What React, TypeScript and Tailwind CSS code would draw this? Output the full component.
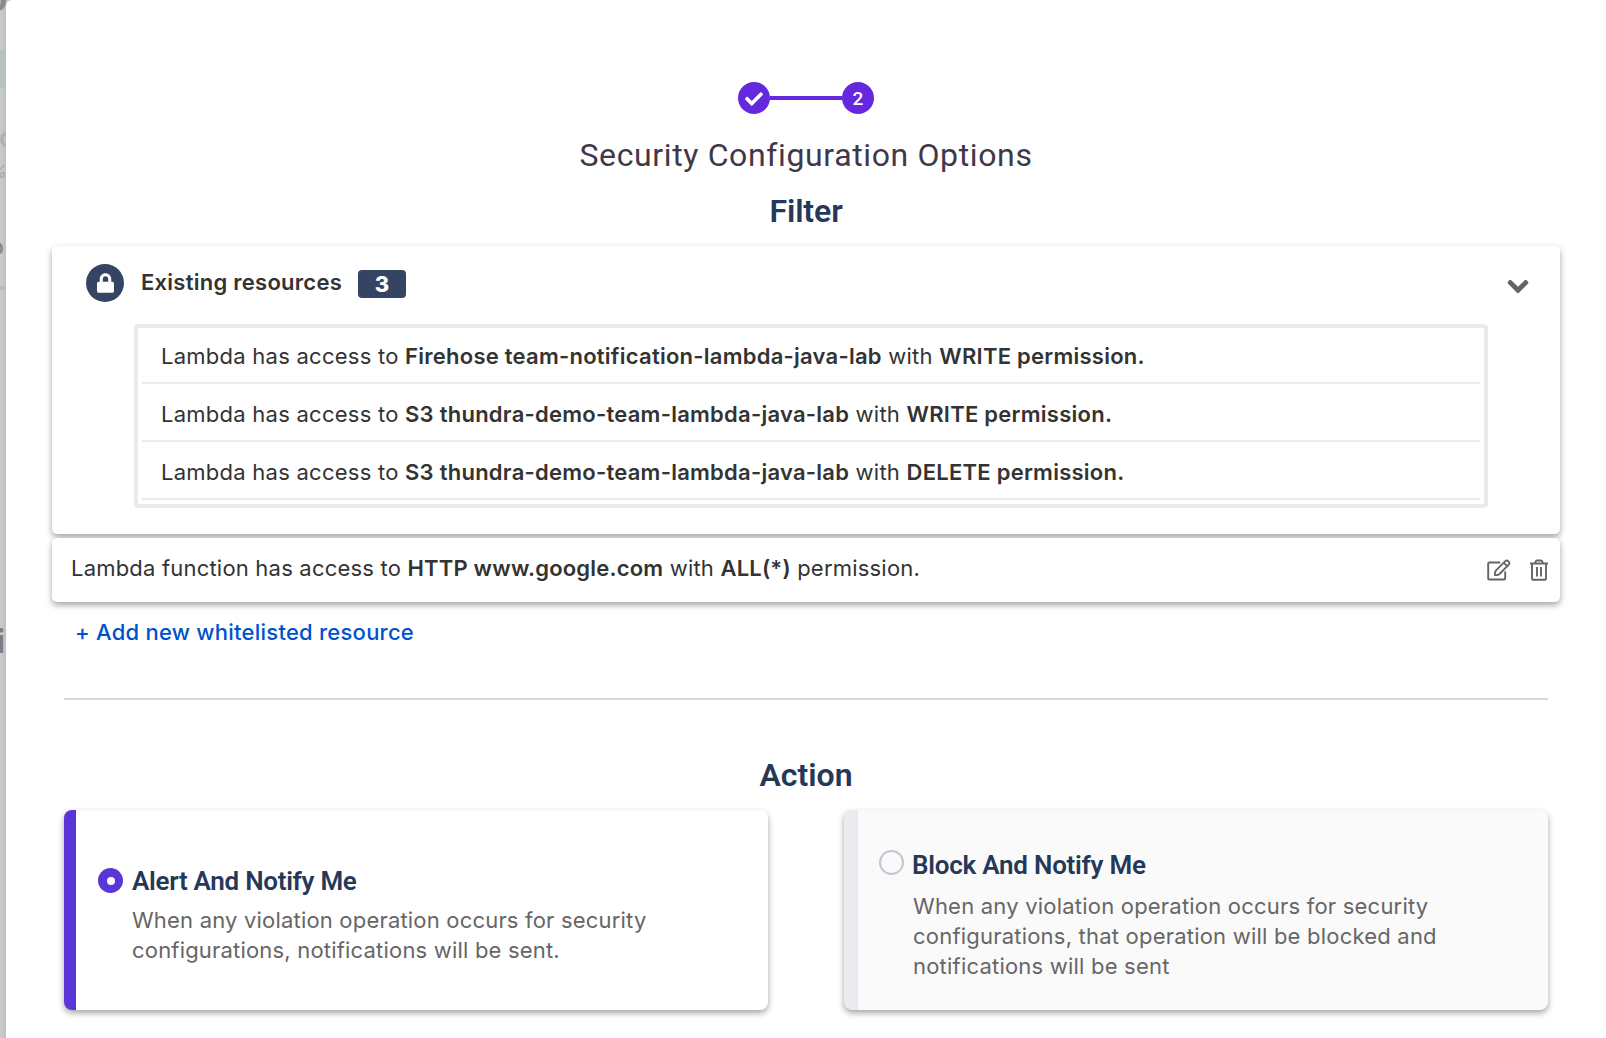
import { FaCheck, FaChevronDown, FaLock } from 'react-icons/fa';

const resources = [
  { name: 'Firehose team-notification-lambda-java-lab', permission: 'WRITE permission.' },
  { name: 'S3 thundra-demo-team-lambda-java-lab', permission: 'WRITE permission.' },
  { name: 'S3 thundra-demo-team-lambda-java-lab', permission: 'DELETE permission.' },
];

/** Dimmed page that shows along the left edge of the dialog. */
function Backdrop() {
  return (
    <div className="relative w-1.5 shrink-0 bg-linear-to-r from-[#cbcbcb] to-[#c0c0c0]">
      <div className="absolute top-[50px] h-[38px] w-full bg-[#b5c2bd]" />
      <span className="absolute -top-[18px] -right-px text-[34px] leading-none font-bold text-[#8a8a8a]">o</span>
      <span className="absolute top-[124px] -left-px text-[26px] leading-7 font-semibold text-[#b0b0b0]">c</span>
      <span className="absolute top-[162px] -left-2.5 text-[17px] leading-5 italic text-[#a6a6a6]">%</span>
      <span className="absolute top-[233px] right-[2px] text-[24px] leading-7 font-medium text-[#888888]">o</span>
      <div className="absolute top-[286px] h-1 w-full bg-[#b9b9c0]" />
      <span className="absolute top-[624px] right-[1px] text-[32px] leading-9 font-semibold text-[#7d7d7d]">i</span>
    </div>
  );
}

function EditIcon() {
  return (
    <svg width="24" height="22" viewBox="0 0 24 22" fill="none" stroke="#646464" strokeWidth="1.9" strokeLinejoin="round" strokeLinecap="round">
      <path d="M12.500 3.500H2.200a1 1 0 0 0-1 1v15a1 1 0 0 0 1 1h15a1 1 0 0 0 1-1v-6.300" />
      <path d="M8 16c-.300-2 0-3.500 1-4.600L18.300 2.100a2 2 0 0 1 2.900 0l.600.600a2 2 0 0 1 0 2.900L12.500 15c-1.100 1-2.500 1.300-4.500 1z" />
      <path d="M16.800 3.800l3.400 3.400" />
    </svg>
  );
}

function TrashIcon() {
  return (
    <svg width="18" height="22" viewBox="0 0 18 22" fill="none" stroke="#646464" strokeWidth="1.9" strokeLinejoin="round">
      <path d="M0 4.500h18M5 4.500l.800-2.200a1.200 1.200 0 0 1 1.100-.800h4.200a1.200 1.200 0 0 1 1.100.800l.800 2.200M2 4.500v15.200a1 1 0 0 0 1 1h12a1 1 0 0 0 1-1V4.500" />
      <path d="M7 8v9.500M11 8v9.500" />
    </svg>
  );
}

function Stepper() {
  return (
    <div className="flex items-center justify-center text-white">
      <div className="flex size-8 items-center justify-center rounded-full bg-[#6528e0]">
        <FaCheck className="mt-0.5 size-[18px]" />
      </div>
      <div className="h-1 w-[72px] bg-[#6528e0]" />
      <div className="flex size-8 items-center justify-center rounded-full bg-[#6528e0] pt-[3px] font-[Roboto] text-[19px] font-medium">2</div>
    </div>
  );
}

function ExistingResources() {
  return (
    <section className="h-[288px] rounded-[5px] bg-white pt-[18px] shadow-[0_3px_6px_rgba(0,0,0,0.36)]">
      <header className="flex h-[38px] pr-8 pl-[34px]">
        <div className="flex size-[38px] items-center justify-center rounded-full bg-[#344563] text-white">
          <FaLock className="h-5 w-[17px]" />
        </div>
        <h3 className="mt-[3px] ml-[17px] text-[22px] leading-[30px] font-semibold tracking-[0.26px]">Existing resources</h3>
        <span className="mt-1.5 ml-4 flex h-7 w-12 items-center justify-center rounded bg-[#344563] text-[22px] font-extrabold text-white">3</span>
        <FaChevronDown className="mt-[11px] ml-auto h-[23px] w-5 overflow-visible stroke-[#646464] stroke-[28px] text-[#646464]" />
      </header>
      <ul className="mt-[22px] mr-[72px] ml-[82px] h-[184px] rounded border-4 border-[#eaebef] px-1">
        {resources.map((r) => (
          <li key={r.name + r.permission} className="h-[58px] border-b-2 border-[#eaebef] pt-[15px] pl-[19px] text-[22px] leading-[30px] tracking-[0.25px] first:h-14 first:pt-[13px]">
            Lambda has access to <b className="font-semibold">{r.name}</b> with <b className="font-semibold">{r.permission}</b>
          </li>
        ))}
      </ul>
    </section>
  );
}

function WhitelistRow() {
  return (
    <section className="mt-1 flex h-16 rounded-[5px] bg-white pt-[15px] pr-3 pl-[19px] shadow-[0_3px_6px_rgba(0,0,0,0.36)]">
      <p className="text-[22px] leading-[30px] tracking-[0.2px]">
        Lambda function has access to <b className="font-semibold">HTTP www.google.com</b> with <b className="font-semibold">ALL(*)</b> permission.
      </p>
      <div className="mt-1.5 ml-auto flex h-[22px] gap-[19px]">
        <EditIcon />
        <TrashIcon />
      </div>
    </section>
  );
}

export default function App() {
  return (
    <div className="flex h-[1038px] w-[1606px] overflow-hidden bg-[#c4c4c4] font-[Inter,sans-serif] text-[#333333]">
      <Backdrop />
      <main className="z-10 flex-1 rounded-tl-md bg-white pt-[82px] pr-[46px] pl-[46px]">
        <Stepper />
        <h1 className="mt-[21px] text-center font-[Roboto] text-[32px] leading-10 tracking-[0.63px] text-[#3f3849]">Security Configuration Options</h1>
        <h2 className="mt-4 mb-[15px] text-center font-[Roboto] text-[32px] leading-10 font-semibold tracking-[-0.1px] text-[#253858]">Filter</h2>
        <ExistingResources />
        <WhitelistRow />
        <button className="mt-[15px] ml-[23px] block text-[22px] leading-[30px] font-medium tracking-[0.24px] text-[#0052cc]">+ Add new whitelisted resource</button>
        <hr className="mx-3 mt-[51px] border-t-2 border-[#d8d8d8]" />
        <h2 className="mt-[55px] text-center font-[Roboto] text-[32px] leading-10 font-semibold text-[#253858]">Action</h2>
        <div className="mx-3 mt-[15px] grid grid-cols-2 gap-[76px]">
          <label className="flex h-[200px] rounded-lg border-l-12 border-[#5b36d6] bg-white pl-[22px] shadow-[0_3px_6px_rgba(0,0,0,0.36)]">
            <span className="mt-[58px] flex size-[25px] items-center justify-center rounded-full bg-[#5b36d6]">
              <span className="size-2 rounded-full bg-white" />
            </span>
            <div className="mt-14 ml-[9px]">
              <h3 className="font-[Roboto] text-[26px] leading-[30px] font-semibold tracking-[-0.28px] text-[#253858]">Alert And Notify Me</h3>
              <p className="mt-[9px] w-[540px] text-[22px] leading-[30px] tracking-[0.19px] text-[#666666]">When any violation operation occurs for security configurations, notifications will be sent.</p>
            </div>
          </label>
          <label className="flex h-[200px] rounded-lg border-l-14 border-[#eaebef] bg-[#fafafa] pl-[21px] shadow-[0_3px_6px_rgba(0,0,0,0.36)]">
            <span className="mt-10 size-[25px] rounded-full border-2 border-[#c1c7d0]" />
            <div className="mt-10 ml-[9px]">
              <h3 className="-ml-px font-[Roboto] text-[26px] leading-[30px] font-semibold tracking-[-0.24px] text-[#253858]">Block And Notify Me</h3>
              <p className="mt-[11px] w-[540px] text-[22px] leading-[30px] tracking-[0.21px] text-[#666666]">When any violation operation occurs for security configurations, that operation will be blocked and notifications will be sent</p>
            </div>
          </label>
        </div>
      </main>
    </div>
  );
}
